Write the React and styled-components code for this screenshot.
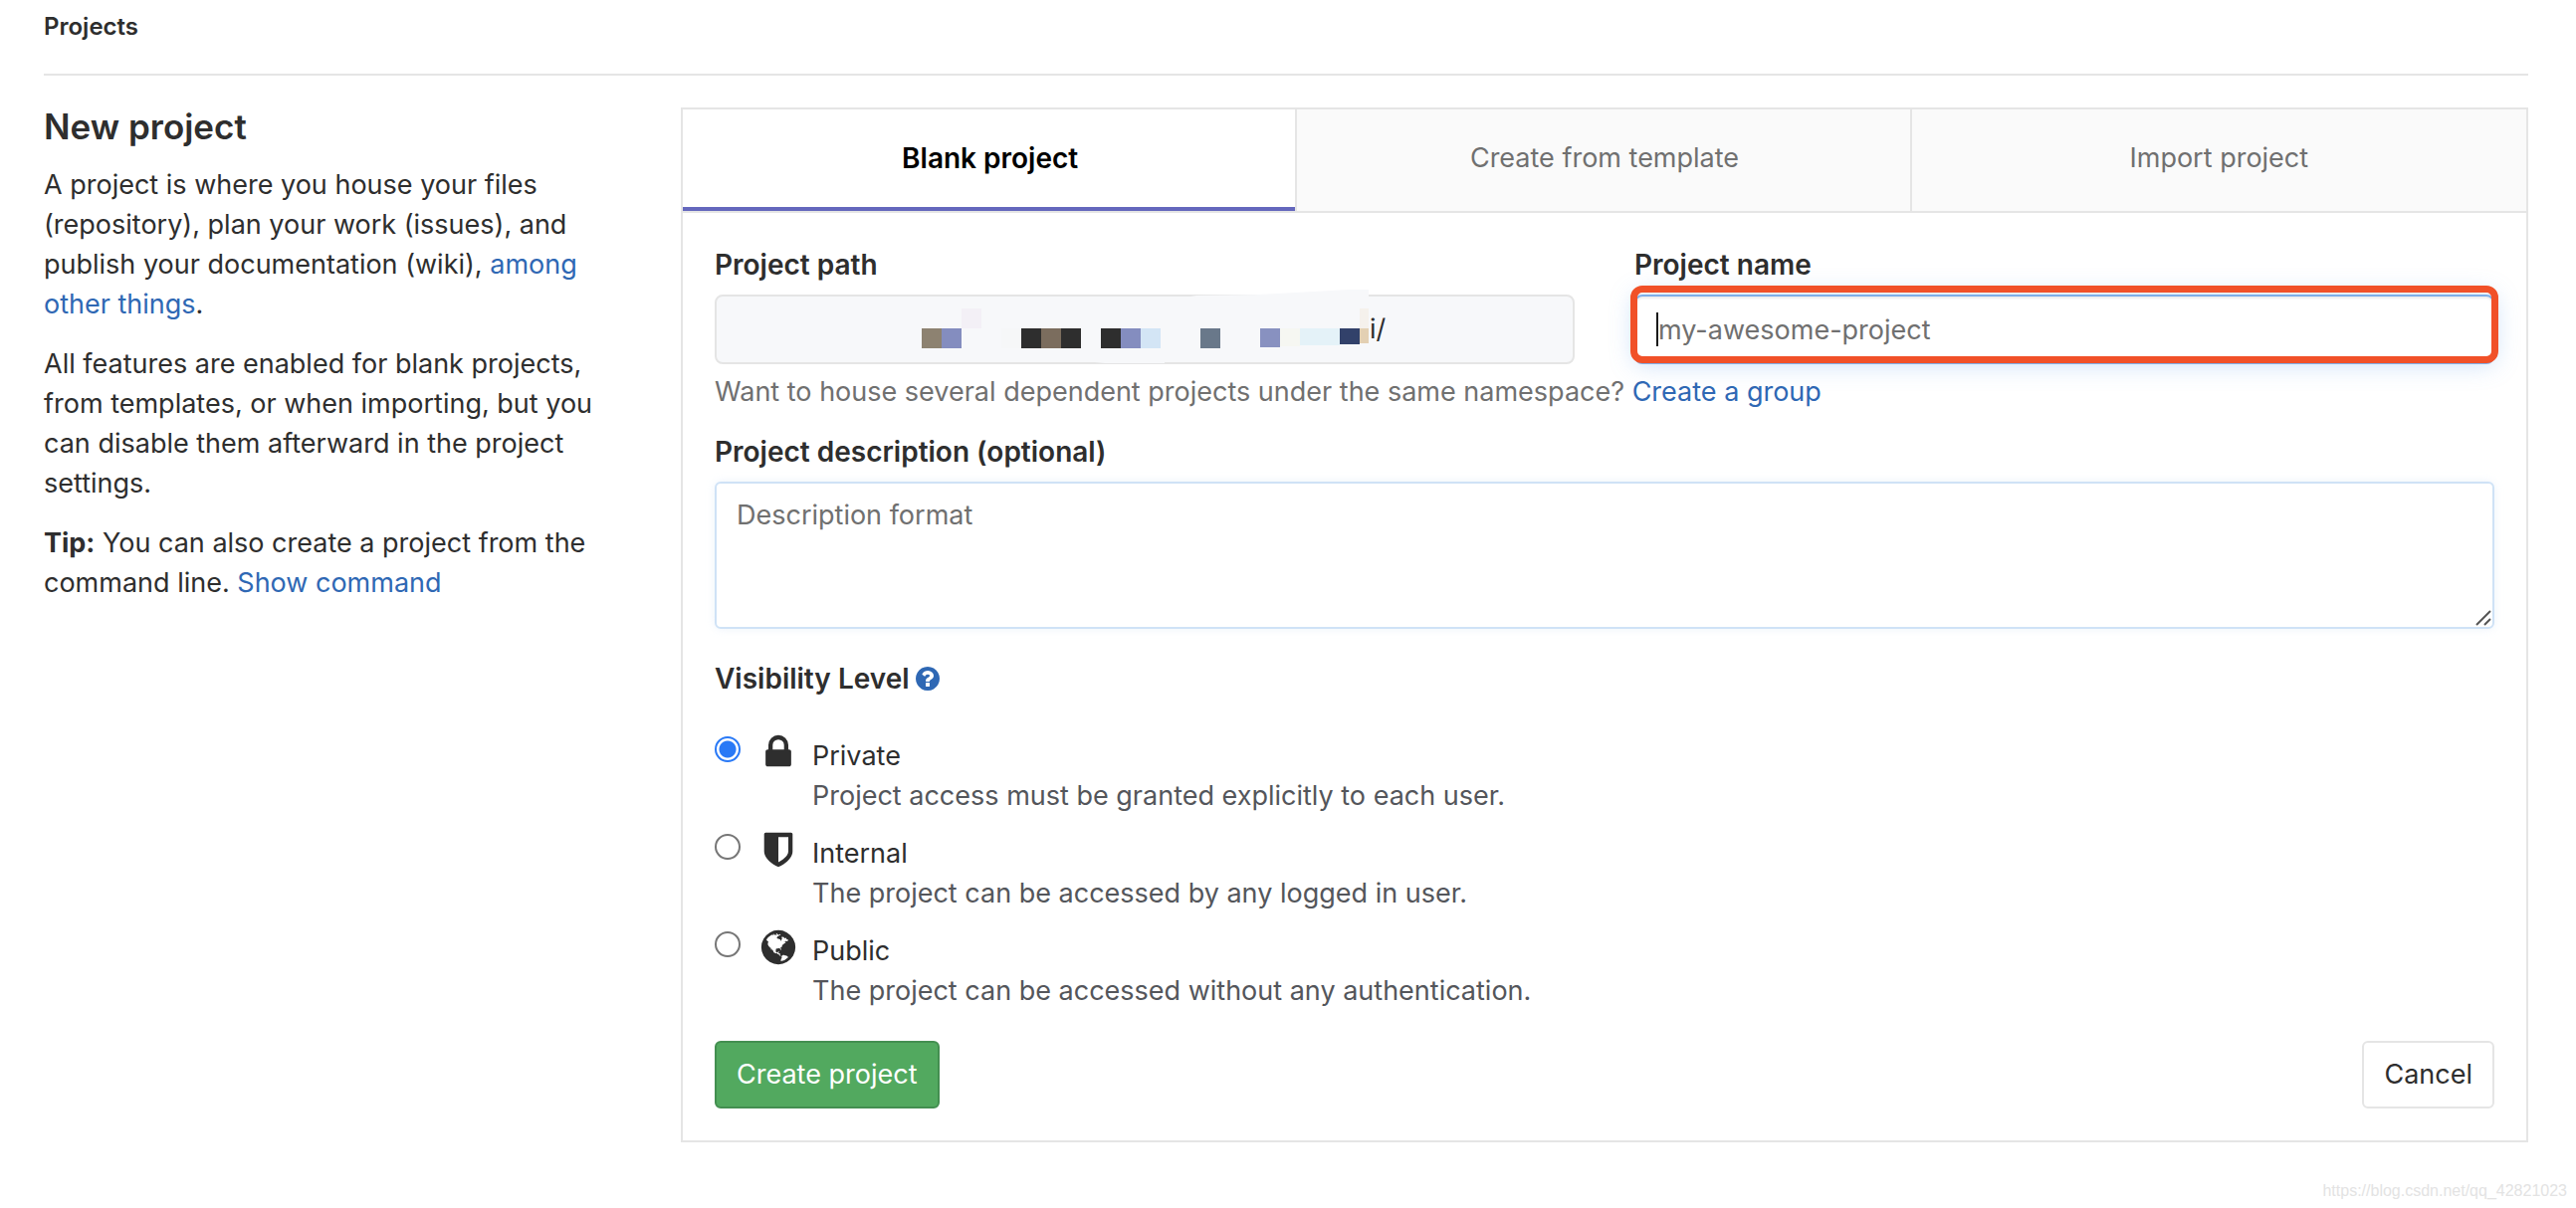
import React, { useState } from 'react';
import styled, { createGlobalStyle } from 'styled-components';

const GlobalStyle = createGlobalStyle`
  * {
    box-sizing: border-box;
  }

  body {
    margin: 0;
    background-color: #fff;
    color: #2e2e2e;
    font-family: Inter, 'Liberation Sans', sans-serif;
    font-size: 27px;
    line-height: 40px;
  }

  input,
  textarea,
  button {
    font-family: inherit;
    font-size: inherit;
    line-height: inherit;
    color: inherit;
  }
`;

const Page = styled.div`
  padding: 0 48px 0 44px;
`;

const Header = styled.header`
  padding: 12px 0 32px;
  border-bottom: 2px solid #e5e5e5;
  font-size: 24px;
  font-weight: 600;
  line-height: 30px;
`;

const Row = styled.div`
  display: grid;
  grid-template-columns: minmax(0, 1fr) minmax(0, 3.2fr);
  gap: 60px;
  align-items: start;
  padding-top: 32px;
`;

const Title = styled.h1`
  margin: 0 0 20px;
  font-size: 35px;
  font-weight: 600;
  line-height: 38px;
`;

const Paragraph = styled.p`
  margin: 0 0 20px;
`;

const Link = styled.a`
  color: #2f68b4;
  text-decoration: none;
`;

const Panel = styled.main`
  border: 2px solid #e5e5e5;
`;

const Tabs = styled.div`
  display: grid;
  grid-template-columns: repeat(3, minmax(0, 1fr));
  border-bottom: 2px solid #e5e5e5;
`;

const Tab = styled.button`
  height: 102px;
  padding: 0;
  border: 0;
  border-bottom: 4px solid ${(props) => (props.$active ? '#6467bd' : '#fafafa')};
  background-color: ${(props) => (props.$active ? '#fff' : '#fafafa')};
  color: ${(props) => (props.$active ? '#000' : '#707070')};
  font-size: ${(props) => (props.$active ? '28px' : '27px')};
  font-weight: ${(props) => (props.$active ? 600 : 400)};
  cursor: pointer;

  & + & {
    box-shadow: -2px 0 0 #e5e5e5;
  }
`;

const Form = styled.form`
  padding: 32px;
`;

const Fields = styled.div`
  display: grid;
  grid-template-columns: repeat(2, minmax(0, 1fr));
  gap: 60px;
`;

const Label = styled.label`
  display: block;
  margin-bottom: 10px;
  font-size: 28px;
  font-weight: 600;
`;

const PathBox = styled.div`
  display: flex;
  height: 70px;
  border: 2px solid #e5e5e5;
  border-radius: 8px;
  background-color: #f7f8fa;
`;

const PathInput = styled.input`
  flex: 1;
  min-width: 0;
  padding: 0;
  border: 0;
  background: none;
  outline: none;
`;

const Mosaic = styled.svg`
  flex: none;
  overflow: visible;
`;

const NameBox = styled.div`
  position: relative;
`;

const NameInput = styled.input`
  display: block;
  width: 100%;
  height: 70px;
  padding: 0 22px;
  border: 2px solid #7eaee8;
  border-radius: 8px;
  background-color: #fff;
  box-shadow: inset 0 2px 2px rgba(0, 0, 0, 0.08), 0 0 24px rgba(100, 160, 235, 0.35);
  outline: none;

  &::placeholder {
    color: #707070;
    opacity: 1;
  }
`;

const Highlight = styled.div`
  position: absolute;
  top: -9px;
  right: -4px;
  bottom: 1px;
  left: -4px;
  border: 7px solid #f15128;
  border-radius: 12px;
  pointer-events: none;
`;

const Caret = styled.span`
  position: absolute;
  top: 18px;
  left: 22px;
  width: 2px;
  height: 34px;
  background-color: #1a1a1a;
`;

const Help = styled.p`
  margin: 8px 0 20px;
  color: #707070;
`;

const AreaBox = styled.div`
  position: relative;
`;

const Area = styled.textarea`
  display: block;
  width: 100%;
  height: 148px;
  padding: 12px 20px;
  border: 2px solid #cfe2f6;
  border-radius: 6px;
  box-shadow: 0 0 8px rgba(207, 226, 246, 0.4);
  outline: none;
  resize: none;

  &::placeholder {
    color: #707070;
    opacity: 1;
  }
`;

const Grip = styled.svg`
  position: absolute;
  right: 3px;
  bottom: 3px;
`;

const Visibility = styled.fieldset`
  margin: 30px 0 0;
  padding: 0;
  border: 0;
`;

const Legend = styled.legend`
  display: flex;
  align-items: center;
  gap: 6px;
  padding: 0;
  font-size: 28px;
  font-weight: 600;
`;

const HelpLink = styled(Link)`
  display: flex;
`;

const Options = styled.div`
  display: grid;
  gap: 12px;
  margin-top: 32px;
`;

const Option = styled.div`
  display: grid;
  grid-template-columns: 26px 40px 1fr;
  column-gap: 18px;
  align-items: start;
`;

const Radio = styled.input`
  appearance: none;
  width: 26px;
  height: 26px;
  margin: 6px 0 0;
  border: 2px solid ${(props) => (props.checked ? '#2979f6' : '#767676')};
  border-radius: 50%;
  background: ${(props) => (props.checked ? 'radial-gradient(circle, #2979f6 8px, #fff 9px)' : '#fff')};
`;

const OptionIcon = styled.svg`
  width: 40px;
  height: 40px;
  margin-top: 2px;
  fill: #2e2e2e;
`;

const OptionText = styled.div`
  padding-top: 6px;
  margin-left: -4px;
`;

const OptionName = styled.label`
  display: block;
`;

const OptionHelp = styled.div`
  color: #54565b;
`;

const Actions = styled.div`
  display: flex;
  justify-content: space-between;
  margin-top: 30px;
`;

const Button = styled.button`
  height: 68px;
  padding: 0 20px;
  border: 2px solid ${(props) => (props.$primary ? '#438f50' : '#e5e5e5')};
  border-radius: 6px;
  background-color: ${(props) => (props.$primary ? '#52a95f' : '#fff')};
  color: ${(props) => (props.$primary ? '#fff' : '#2e2e2e')};
  cursor: pointer;
`;

const Footer = styled.footer`
  padding: 38px 9px 6px;
  color: #e3e3e3;
  font-family: 'Liberation Sans', sans-serif;
  font-size: 16px;
  line-height: 22px;
  text-align: right;
`;

const tabs = ['Blank project', 'Create from template', 'Import project'];

const levels = [
  {
    id: 'private',
    name: 'Private',
    help: 'Project access must be granted explicitly to each user.',
    icon: 'M640 768h512V576q0-106-75-181t-181-75-181 75-75 181v192zm832 96v576q0 40-28 68t-68 28H416q-40 0-68-28t-28-68V864q0-40 28-68t68-28h32V576q0-184 132-316t316-132 316 132 132 316v192h32q40 0 68 28t28 68z',
  },
  {
    id: 'internal',
    name: 'Internal',
    help: 'The project can be accessed by any logged in user.',
    icon: 'M1344 960V320H896v1137q119-63 213-137 235-184 235-360zm192-768v768q0 86-33.5 170.5t-83 150-118 127.500-126.500 103-121 77.500-89.500 49.500-42.500 20q-12 6-26 6t-26-6q-16-7-42.500-20t-89.500-49.500-121-77.500-126.500-103-118-127.500-83-150T256 960V192q0-26 19-45t45-19h1152q26 0 45 19t19 45z',
  },
  {
    id: 'public',
    name: 'Public',
    help: 'The project can be accessed without any authentication.',
    icon: 'M896 128q209 0 385.500 103t279.500 279.500 103 385.500-103 385.500-279.500 279.500-385.500 103-385.500-103-279.500-279.500-103-385.500 103-385.500 279.500-279.500 385.500-103zm274 521q-2 1-9.500 9.500t-13.500 9.500q2 0 4.500-5t5-11 3.500-7q6-7 22-15 14-6 52-12 34-8 51 11-2-2 9.500-13t14.500-12q3-2 15-4.500t15-7.500l2-22q-12 1-17.500-7t-6.500-21q0 2-6 8 0-7-4.500-8t-11.500 1-9 1q-10-3-15-7.500t-8-16.500-4-15q-2-5-9.500-11t-9.500-10q-1-2-2.500-5.500t-3-6.500-4-5.500-5.500-2.500-7 5-7.500 10-4.500 5q-3-2-6-1.500t-4.500 1-4.500 3-5 3.500q-3 2-8.500 3t-8.500 2q15-5-1-11-10-4-16-3 9-4 7.500-12t-8.500-14h5q-1-4-8.500-8.500t-17.500-8.500-13-6q-8-5-34-9.500t-33-.5q-5 6-4.500 10.500t4 14 3.500 12.500q1 6-5.500 13t-6.500 12q0 7 14 15.500t10 21.500q-3 8-16 16t-16 12q-5 8-1.500 18.500t10.500 16.500q2 2 1.500 4t-3.500 4.500-5.500 4-6.500 3.500l-3 2q-11 5-20.500-6t-13.500-26q-7-25-16-30-23-8-29 1-5-13-41-26-25-9-58-4 6-1 0-15-7-15-19-12 3-6 4-17.500t1-13.500q3-13 12-23 1-1 7-8.500t9.500-13.500.5-6q35 4 50-11 5-5 11.500-17t10.500-17q9-6 14-5.500t14.500 5.500 14.500 5q14 1 15.500-11t-7.500-20q12 1 3-17-4-7-8-9-12-4-27 5-8 4 2 8-1-1-9.500 10.500t-16.500 17.500-16-5q-1-1-5.500-13.500t-9.500-13.500q-8 0-16 15 3-8-11-15t-24-8q19-12-8-27-7-4-20.500-5t-19.500 4q-5 7-5.500 11.500t5 8 10.500 5.500 11.500 4 8.500 3q14 10 8 14-2 1-8.500 3.500t-11.500 4.500-6 4q-3 4 0 14t-2 14q-5-5-9-17.500t-7-16.500q7 9-25 6l-10-1q-4 0-16 2t-20.500 1-13.500-8q-4-8 0-20 1-4 4-2-4-3-11-9.500t-10-8.500q-46 15-94 41 6 1 12-1 5-2 13-6.500t10-5.500q34-14 42-7l5-5q14 16 20 25-7-4-30-1-20 6-22 12 7 12 5 18-4-3-11.500-10t-14.500-11-15-5q-16 0-22 1-146 80-235 222 7 7 12 8 4 1 5 9t2.500 11 11.500-3q9 8 3 19 1-1 44 27 19 17 21 21 3 11-10 18-1-2-9-9t-9-4q-3 5 .5 18.500t10.500 12.500q-7 0-9.500 16t-2.500 35.500-1 23.500l2 1q-3 12 5.500 34.500t21.500 19.500q-13 3 20 43 6 8 8 9 3 2 12 7.500t15 10 10 10.500q4 5 10 22.500t14 23.500q-2 6 9.500 20t10.500 23q-1 0-2.500 1t-2.500 1q3 7 15.500 14t15.500 13q1 3 2 10t3 11 8 2q2-20-24-62-15-25-17-29-3-5-5.500-15.500t-4.500-14.500q2 0 6 1.500t8.500 3.500 7.500 4 2 3q-3 7 2 17.500t12 18.500 17 19 12 13q6 6 14 19.500t0 13.500q9 0 20 10.500t17 19.500q5 8 8 26t5 24q2 7 8.500 13.500t12.500 9.500l16 8 13 7q5 2 18.500 10.500t21.500 11.500q10 4 16 4t14.500-2.500 13.500-3.500q15-2 29 15t21 21q36 19 55 11-2 1 .5 7.500t8 15.500 9 14.500 5.500 8.500q5 6 18 15t18 15q6-4 7-9-3 8 7 20t18 10q14-3 14-32-31 15-49-18 0-1-2.500-5.500t-4-8.500-2.500-8.500 0-7.500 5-3q9 0 10-3.500t-2-12.500-4-13q-1-8-11-20t-12-15q-5 9-16 8t-16-9q0 1-1.500 5.500t-1.500 6.500q-13 0-15-1 1-3 2.500-17.500t3.500-22.500q1-4 5.500-12t7.500-14.500 4-12.500-4.500-9.500-17.500-2.500q-19 1-26 20-1 3-3 10.500t-5 11.500-9 7q-7 3-24 2t-24-5q-13-8-22.500-29t-9.500-37q0-10 2.500-26.500t3-25-5.500-24.500q3-2 9-9.500t10-10.500q2-1 4.500-1.500t4.500 0 4-1.500 3-6q-1-1-4-3-3-3-4-3 7 3 28.500-1.500t27.500 1.500q15 11 22-2 0-1-2.500-9.500t-.5-13.500q5 27 29 9 3 3 15.500 5t17.500 5q3 2 7 5.500t5.500 4.500 5-.5 8.500-6.500q10 14 12 24 11 40 19 44 7 3 11 2t4.500-9.500 0-14-1.500-12.500l-1-8v-18l-1-8q-15-3-18.500-12t1.500-18.500 15-18.500q1-1 8-3.500t15.500-6.500 12.500-8q21-19 15-35 7 0 11-9-1 0-5-3t-7.500-5-4.500-2q9-5 2-16 5-3 7.500-11t7.500-10q9 12 21 2 7-8 1-16 5-7 20.500-10.500t18.500-9.500q7 2 8-2t1-12 3-12q4-5 15-9t13-5l17-11q3-4 0-4 18 2 31-11 10-11-6-20 3-6-3-9.500t-15-5.500q3-1 11.500-.5t10.500-1.500q15-10-7-16-17-5-43 12zm-163 877q206-36 351-189-3-3-12.500-4.500t-12.500-3.500q-18-7-24-8 1-7-2.500-13t-8-9-12.500-8-11-7q-2-2-7-6t-7-5.500-7.500-4.500-8.500-2-10 1l-3 1q-3 1-5.500 2.500t-5.500 3-4 3 0 2.500q-21-17-36-22-5-1-11-5.500t-10.500-7-10-1.500-11.500 7q-5 5-6 15t-2 13q-7-5 0-17.500t2-18.500q-3-6-10.500-4.500t-12 4.500-11.500 8.500-9 6.500-8.500 5.500-8.500 7.500q-3 4-6 12t-5 11q-2-4-11.500-6.500t-9.500-5.500q2 10 4 35t5 38q7 31-12 48-27 25-29 40-4 22 12 26 0 7-8 20.500t-7 21.500q0 6 2 16z',
  },
];

const questionIcon =
  'M1024 1376v-192q0-14-9-23t-23-9H800q-14 0-23 9t-9 23v192q0 14 9 23t23 9h192q14 0 23-9t9-23zm256-672q0-88-55.5-163t-138.500-116-170-41q-243 0-371 213-15 24 8 42l132 100q7 6 19 6 16 0 25-12 53-68 86-92 34-24 86-24 48 0 85.500 26t37.500 59q0 38-20 61t-68 45q-63 28-115.500 86.500T768 1020v36q0 14 9 23t23 9h192q14 0 23-9t9-23q0-19 21.500-49.500t54.500-49.500q32-18 49-28.500t46-35 44.500-48 28-60.500 12.500-81zm384 192q0 209-103 385.500t-279.500 279.500-385.500 103-385.500-103-279.500-279.500-103-385.500 103-385.500 279.500-279.500 385.500-103 385.500 103 279.500 279.500 103 385.500z';

// x, y, width, height, fill
const blocks = [
  [206, 32, 20, 20, '#8d8271'],
  [226, 32, 20, 20, '#848dbf'],
  [246, 12, 20, 20, '#f3f0f6'],
  [286, 32, 20, 20, '#f6f7f8'],
  [306, 32, 20, 20, '#2e2e2e'],
  [326, 32, 20, 20, '#7b6d5e'],
  [346, 32, 20, 20, '#2e2e2e'],
  [386, 32, 20, 20, '#2e2e2e'],
  [406, 32, 20, 20, '#848dbf'],
  [426, 32, 20, 20, '#d3e5f5'],
  [486, 32, 20, 20, '#69788a'],
  [546, 32, 20, 19, '#8891c0'],
  [566, 32, 20, 18, '#f6f7f2'],
  [586, 32, 40, 17, '#e4f2f8'],
  [626, 32, 20, 16, '#32416a'],
  [646, 32, 9, 15, '#e3d0b3'],
  [646, 12, 9, 20, '#f5f1ec'],
];

const App = () => {
  const [activeTab, setActiveTab] = useState(tabs[0]);
  const [level, setLevel] = useState('private');
  const [name, setName] = useState('');

  return (
    <>
      <GlobalStyle />
      <Page>
        <Header>Projects</Header>
        <Row>
          <aside>
            <Title>New project</Title>
            <Paragraph>
              A project is where you house your files (repository), plan your work (issues), and publish your
              documentation (wiki), <Link href="#features">among other things</Link>.
            </Paragraph>
            <Paragraph>
              All features are enabled for blank projects, from templates, or when importing, but you can disable them
              afterward in the project settings.
            </Paragraph>
            <Paragraph>
              <strong>Tip:</strong> You can also create a project from the command line.{' '}
              <Link href="#command">Show command</Link>
            </Paragraph>
          </aside>

          <Panel>
            <Tabs role="tablist">
              {tabs.map((tab) => (
                <Tab
                  key={tab}
                  type="button"
                  role="tab"
                  aria-selected={tab === activeTab}
                  $active={tab === activeTab}
                  onClick={() => setActiveTab(tab)}
                >
                  {tab}
                </Tab>
              ))}
            </Tabs>

            <Form onSubmit={(e) => e.preventDefault()}>
              <Fields>
                <div>
                  <Label htmlFor="path">Project path</Label>
                  <PathBox>
                    <Mosaic width="656" height="66" aria-hidden="true">
                      <path d="M476 0L482-1L545-2L600-5L635-7H655V2H476z" fill="#f7f8fa" />
                      <path d="M370 65H450V67H390z" fill="#f7f8fa" />
                      {blocks.map(([x, y, width, height, fill]) => (
                        <rect key={`${x}-${y}`} x={x} y={y} width={width} height={height} fill={fill} />
                      ))}
                    </Mosaic>
                    <PathInput id="path" type="text" value="i/" readOnly />
                  </PathBox>
                </div>
                <div>
                  <Label htmlFor="name">Project name</Label>
                  <NameBox>
                    <NameInput
                      id="name"
                      type="text"
                      placeholder="my-awesome-project"
                      value={name}
                      onChange={(e) => setName(e.target.value)}
                    />
                    {!name && <Caret />}
                    <Highlight />
                  </NameBox>
                </div>
              </Fields>
              <Help>
                Want to house several dependent projects under the same namespace?{' '}
                <Link href="#group">Create a group</Link>
              </Help>

              <Label htmlFor="description">Project description (optional)</Label>
              <AreaBox>
                <Area id="description" placeholder="Description format" />
                <Grip width="16" height="16" stroke="#555" strokeWidth="2" aria-hidden="true">
                  <path d="M1 15L15 1M9 15L15 9" />
                </Grip>
              </AreaBox>

              <Visibility>
                <Legend>
                  Visibility Level
                  <HelpLink href="#visibility" aria-label="Visibility help">
                    <svg width="24" height="24" viewBox="128 128 1536 1536" fill="currentColor">
                      <path d={questionIcon} />
                    </svg>
                  </HelpLink>
                </Legend>
                <Options>
                  {levels.map((item) => (
                    <Option key={item.id}>
                      <Radio
                        id={item.id}
                        type="radio"
                        name="visibility"
                        checked={level === item.id}
                        onChange={() => setLevel(item.id)}
                      />
                      <OptionIcon viewBox="0 0 1792 1792" aria-hidden="true">
                        <path d={item.icon} />
                      </OptionIcon>
                      <OptionText>
                        <OptionName htmlFor={item.id}>{item.name}</OptionName>
                        <OptionHelp>{item.help}</OptionHelp>
                      </OptionText>
                    </Option>
                  ))}
                </Options>
              </Visibility>

              <Actions>
                <Button type="submit" $primary>
                  Create project
                </Button>
                <Button type="button">Cancel</Button>
              </Actions>
            </Form>
          </Panel>
        </Row>
      </Page>
      <Footer>https://blog.csdn.net/qq_42821023</Footer>
    </>
  );
};

export default App;
